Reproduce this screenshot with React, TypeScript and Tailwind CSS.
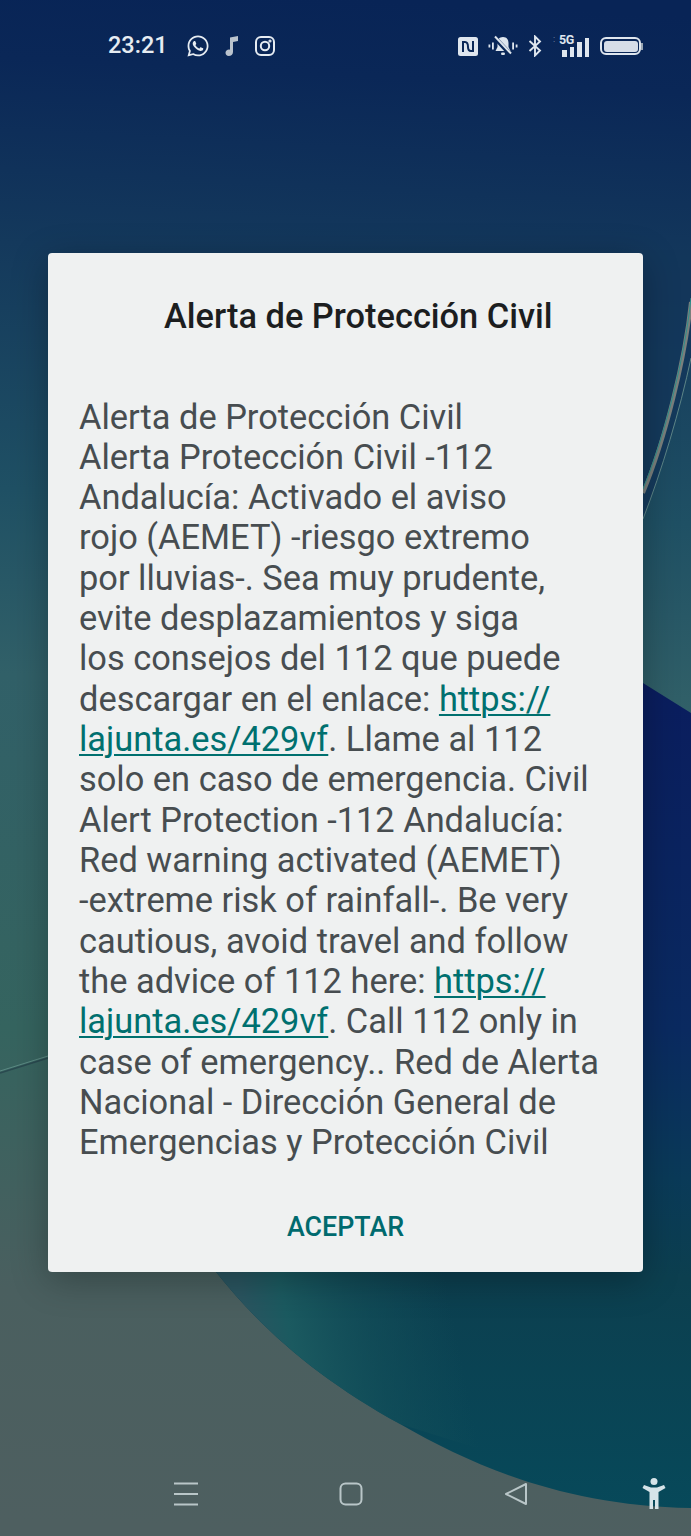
import { FaWhatsapp } from 'react-icons/fa';

const lineClass = 'block whitespace-nowrap';

function Link({ children }: { children: string }) {
  return <span className="text-[#00706f] underline decoration-[1.5px] underline-offset-[3px]">{children}</span>;
}

function Wallpaper() {
  return (
    <svg className="absolute inset-0" width="691" height="1536" viewBox="0 0 691 1536" fill="none">
      <defs>
        <linearGradient id="base" gradientUnits="userSpaceOnUse" x1="380" y1="0" x2="300" y2="1536">
          <stop offset="0" stopColor="#082456" />
          <stop offset="0.05" stopColor="#0a2757" />
          <stop offset="0.17" stopColor="#14395c" />
          <stop offset="0.33" stopColor="#1f5064" />
          <stop offset="0.45" stopColor="#316068" />
          <stop offset="0.68" stopColor="#35645f" />
          <stop offset="0.85" stopColor="#4a5f5f" />
          <stop offset="1" stopColor="#4e5f60" />
        </linearGradient>
        <linearGradient id="navy" gradientUnits="userSpaceOnUse" x1="0" y1="683" x2="0" y2="1510">
          <stop offset="0" stopColor="#0a1d5e" />
          <stop offset="0.42" stopColor="#0a2a60" />
          <stop offset="0.6" stopColor="#0a3a58" />
          <stop offset="0.72" stopColor="#0c3f4f" />
          <stop offset="1" stopColor="#07495a" />
        </linearGradient>
        <linearGradient id="tealEdge" gradientUnits="userSpaceOnUse" x1="240" y1="1290" x2="440" y2="1250">
          <stop offset="0" stopColor="#2a5560" />
          <stop offset="0.2" stopColor="#1b5a60" />
          <stop offset="0.6" stopColor="#14505a" stopOpacity="0.6" />
          <stop offset="1" stopColor="#14505a" stopOpacity="0" />
        </linearGradient>
      </defs>
      <rect width="691" height="1536" fill="url(#base)" />
      <path d="M643 250 H691 V358 C680 410 662 470 643 519 Z" fill="#13365a" fillOpacity="0.8" />
      <path d="M643 683 L691 713 V1508 C570 1506 480 1470 400 1424 C320 1380 262 1330 216 1272 L216 900 Z" fill="url(#navy)" />
      <path d="M643 1272 V1500 L400 1424 C320 1380 262 1330 216 1272 Z" fill="url(#tealEdge)" />
      <path d="M691 302 C685 360 665 440 643 493" stroke="#7a7f7c" strokeWidth="4" />
      <path d="M691 298 C685 356 665 436 643 489" stroke="#2f8f8c" strokeWidth="1" />
      <path d="M691 358 C680 410 662 470 643 519" stroke="#5d8587" strokeWidth="1" />
      <path d="M0 1073 L48 1058" stroke="#2a4a50" strokeWidth="1.5" />
      <path d="M0 1071 L48 1056" stroke="#5c8a84" strokeWidth="1" />
    </svg>
  );
}

function StatusBar() {
  return (
    <div className="relative flex h-[92px] items-center justify-between pl-[108px] pr-[48px] text-[#e6ecf2]">
      <div className="flex items-center">
        <span className="w-[58px] text-[23.5px] font-medium leading-none">23:21</span>
        <FaWhatsapp className="ml-[20px] text-[24px]" />
        <svg className="ml-[14px]" width="15" height="22" viewBox="0 0 15 22" fill="#bac3cd">
          <path d="M6 2.5 L14 1 V6 L9 7 V17 C9 19.5 7 21 4.8 21 C2.8 21 1.5 19.6 1.5 17.8 C1.5 15.9 3 14.5 5 14.5 C5.4 14.5 5.7 14.55 6 14.65 Z" />
        </svg>
        <svg className="ml-[16px]" width="20" height="20" viewBox="0 0 20 20" fill="none" stroke="#e6ecf2" strokeWidth="2">
          <rect x="1" y="1" width="18" height="18" rx="5" />
          <circle cx="10" cy="10" r="4.2" />
          <circle cx="15" cy="5" r="0.6" fill="#e6ecf2" />
        </svg>
      </div>
      <div className="flex items-center">
        <svg width="20" height="19" viewBox="0 0 20 19">
          <rect width="20" height="19" rx="2.5" fill="#dfe6ee" />
          <path d="M5 15 V5 H7 C10 5 10 8 10 10 C10 12 10 14 13 14 H15 V4" stroke="#0a2757" strokeWidth="2" fill="none" />
        </svg>
        <svg className="ml-[10px]" width="30" height="22" viewBox="0 0 30 22" fill="#dfe6ee">
          <path d="M15 2 C11 2 9.5 5 9.5 8 V12 L7.5 16 H22.5 L20.5 12 V8 C20.5 5 19 2 15 2 Z" />
          <rect x="13" y="17.5" width="4" height="2.5" rx="1.2" />
          <rect x="0.5" y="9.5" width="1.8" height="3" />
          <rect x="4" y="7.5" width="1.8" height="7" />
          <rect x="24.2" y="7.5" width="1.8" height="7" />
          <rect x="27.7" y="9.5" width="1.8" height="3" />
          <path d="M7 3 L23 20" stroke="#0a2757" strokeWidth="4.5" />
          <path d="M7 1.5 L23 18.5" stroke="#dfe6ee" strokeWidth="2" />
        </svg>
        <svg className="ml-[10px]" width="14" height="22" viewBox="0 0 14 22" fill="none" stroke="#dfe6ee" strokeWidth="1.9">
          <path d="M1.5 6 L12 15.5 L7 20.5 V1.5 L12 6.5 L1.5 16" />
        </svg>
        <div className="relative ml-[10px] h-[20px] w-[38px] self-end">
          <span className="absolute left-[1px] top-[-2px] text-[9px] leading-[9px] tracking-[1px] text-[#7f93a8]">:</span>
          <span className="absolute left-[7px] top-[-3px] text-[12.5px] font-bold leading-[12px] tracking-[-0.3px] text-[#dfe6ee]">5G</span>
          <div className="absolute bottom-0 left-[10px] flex items-end gap-[3px]">
            <div className="h-[7px] w-[4.5px] bg-[#dfe6ee]" />
            <div className="h-[10px] w-[4.5px] bg-[#dfe6ee]" />
            <div className="h-[15px] w-[4.5px] bg-[#dfe6ee]" />
            <div className="h-[19px] w-[4.5px] bg-[#dfe6ee]" />
          </div>
        </div>
        <div className="ml-[10px] flex items-center">
          <div className="h-[18px] w-[41px] rounded-[6px] border-2 border-[#dfe6ee] p-[1.5px]">
            <div className="h-full w-full rounded-[3px] bg-[#d6dde8]" />
          </div>
          <div className="h-[7px] w-[2px] bg-[#9aa6b2]" />
        </div>
      </div>
    </div>
  );
}

function AlertDialog() {
  return (
    <div className="relative mx-[48px] mt-[161px] flex h-[1019px] flex-col rounded-[4px] bg-[#eff1f1] shadow-[0_8px_36px_rgba(0,0,0,0.28)]">
      <h1 className="mt-[42px] whitespace-nowrap pl-[116px] text-[34.4px] font-medium leading-[42px] text-[#1c1e1f]">
        Alerta de Protección Civil
      </h1>
      <p className="mt-[59.5px] pl-[31px] text-[34.4px] leading-[40.33px] text-[#474d50]">
        <span className={lineClass}>Alerta de Protección Civil</span>
        <span className={lineClass}>Alerta Protección Civil -112</span>
        <span className={lineClass}>Andalucía: Activado el aviso</span>
        <span className={lineClass}>rojo (AEMET) -riesgo extremo</span>
        <span className={lineClass}>por lluvias-. Sea muy prudente,</span>
        <span className={lineClass}>evite desplazamientos y siga</span>
        <span className={lineClass}>los consejos del 112 que puede</span>
        <span className={lineClass}>descargar en el enlace: <Link>https://</Link></span>
        <span className={lineClass}><Link>lajunta.es/429vf</Link>. Llame al 112</span>
        <span className={lineClass}>solo en caso de emergencia. Civil</span>
        <span className={lineClass}>Alert Protection -112 Andalucía:</span>
        <span className={lineClass}>Red warning activated (AEMET)</span>
        <span className={lineClass}>-extreme risk of rainfall-. Be very</span>
        <span className={lineClass}>cautious, avoid travel and follow</span>
        <span className={lineClass}>the advice of 112 here: <Link>https://</Link></span>
        <span className={lineClass}><Link>lajunta.es/429vf</Link>. Call 112 only in</span>
        <span className={lineClass}>case of emergency.. Red de Alerta</span>
        <span className={lineClass}>Nacional - Dirección General de</span>
        <span className={lineClass}>Emergencias y Protección Civil</span>
      </p>
      <button className="mt-[48.5px] text-center text-[26.8px] font-medium leading-[32px] text-[#006a6e]">ACEPTAR</button>
    </div>
  );
}

function NavBar() {
  return (
    <div className="relative mt-[206px] flex items-center pl-[174px] text-[#b9c6c8]">
      <svg width="24" height="24" viewBox="0 0 24 24" stroke="currentColor" strokeWidth="2">
        <path d="M0 1.5 H24 M0 12 H24 M0 22.5 H24" />
      </svg>
      <svg className="ml-[141px]" width="24" height="24" viewBox="0 0 24 24" fill="none" stroke="currentColor" strokeWidth="2">
        <rect x="1.5" y="1.5" width="21" height="21" rx="5" />
      </svg>
      <svg className="ml-[141px]" width="24" height="24" viewBox="0 0 24 24" fill="none" stroke="currentColor" strokeWidth="2" strokeLinejoin="round">
        <path d="M22 2 V22 L2 12 Z" />
      </svg>
      <svg className="ml-[114px]" width="24" height="32" viewBox="0 0 24 32" fill="#d5e3e8">
        <circle cx="12" cy="3.5" r="3.5" />
        <path d="M0.5 10 L2 7 L9 9.5 H15 L22 7 L23.5 10 L16.5 14 V31 H13 V22 H11 V31 H7.5 V14 Z" />
      </svg>
    </div>
  );
}

export default function App() {
  return (
    <div className="relative h-[1536px] w-[691px] overflow-hidden font-['Roboto',sans-serif]">
      <Wallpaper />
      <StatusBar />
      <AlertDialog />
      <NavBar />
    </div>
  );
}
